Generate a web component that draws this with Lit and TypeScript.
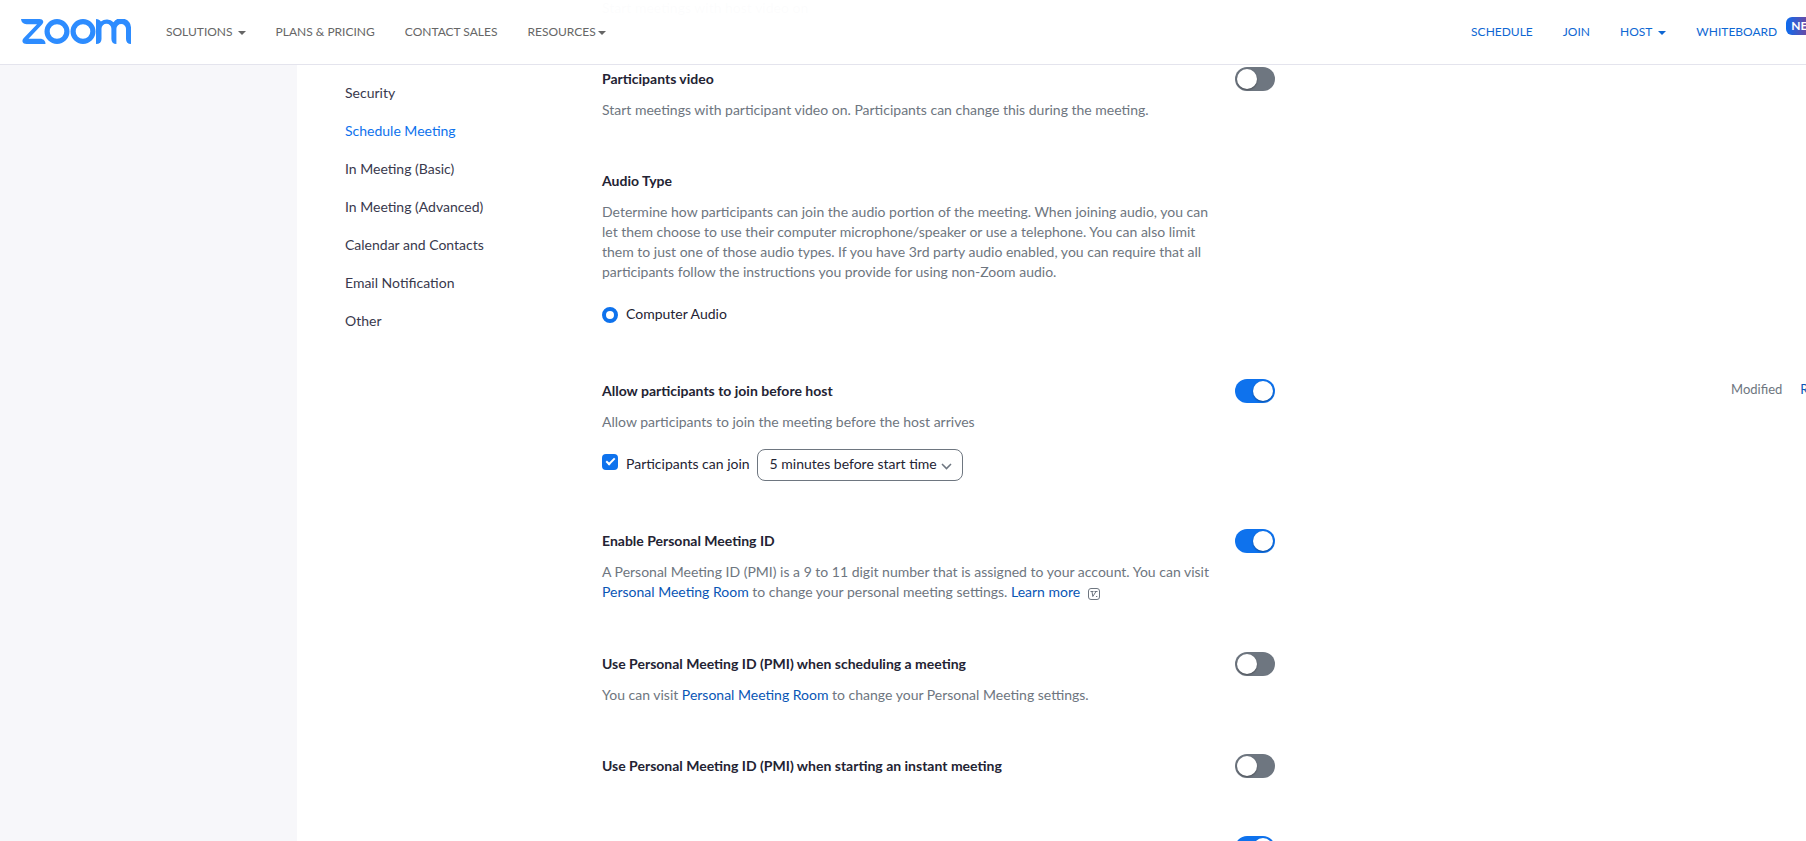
import { LitElement, html, css, svg, nothing } from "lit";
import type { TemplateResult } from "lit";
import { customElement, property } from "lit/decorators.js";
import { classMap } from "lit/directives/class-map.js";

const caret = html`<svg class="caret" viewBox="0 0 8 4" aria-hidden="true">${svg`<path d="M0 0h8L4 4z" fill="currentColor"/>`}</svg>`;

@customElement("zoom-logo")
class ZoomLogo extends LitElement {
  static styles = css`
    :host { display: block; }
    svg { display: block; width: 110px; height: 25px; }
  `;
  render() {
    return html`<svg viewBox="0 0 110 25" role="img" aria-label="zoom" fill="none" stroke="#2d8cff">
      <path d="M0 0H18.500C22.500 0 23.300 3.200 21 5.500L7.500 19.800H19C22.500 19.800 24.500 22 24.500 25H5.500C1.300 25 .3 21.600 2.800 19L16 5.200H5.500C2.200 5.200 .3 3.200 0 0z" fill="#2d8cff" stroke="none"/>
      <circle cx="36" cy="12.500" r="9.900" stroke-width="5.200"/>
      <circle cx="62" cy="12.500" r="9.900" stroke-width="5.200"/>
      <path d="M75 0c2.300 0 3.900 .9 4.900 2.500A9.500 9.500 0 0 1 92.500 3.300 9.700 9.700 0 0 1 110 9.500V25c-3.200 0-5-1.900-5-5V9.800a4.800 4.800 0 0 0-9.600 0V25c-3.200 0-5-1.900-5-5V9.800a4.900 4.900 0 0 0-9.900 0V20c0 3.100-1.900 5-5.500 5z" fill="#2d8cff" stroke="none"/>
    </svg>`;
  }
}

@customElement("site-header")
class SiteHeader extends LitElement {
  static styles = css`
    :host { display: block; background: rgba(255, 255, 255, 0.98); border-bottom: 1px solid #e4e4ed; }
    .bar { display: flex; align-items: center; height: 64px; box-sizing: border-box; padding: 0 17px 1px 21px; font-size: 12px; line-height: 20px; }
    zoom-logo { margin-right: 35px; }
    nav { display: flex; gap: 30px; }
    .account { margin-left: auto; }
    a { color: #666; text-decoration: none; white-space: nowrap; display: flex; align-items: center; gap: 5px; }
    .tight { gap: 2px; }
    .account a { color: #0e67d3; gap: 6px; }
    .caret { width: 8px; height: 4px; margin-top: 2px; }
    .board { display: flex; gap: 9px; }
    .badge { align-self: flex-start; margin-top: -5px; height: 18px; padding: 0 5px; border-radius: 6px;
      background: linear-gradient(90deg, #0b6cf0, #b3306b 36px); color: #fff; font-size: 12px; font-weight: 700; line-height: 18px; }
  `;
  render() {
    return html`<header class="bar">
      <zoom-logo></zoom-logo>
      <nav aria-label="Products">
        <a href="#solutions">SOLUTIONS ${caret}</a>
        <a href="#plans">PLANS &amp; PRICING</a>
        <a href="#sales">CONTACT SALES</a>
        <a class="tight" href="#resources">RESOURCES${caret}</a>
      </nav>
      <nav class="account" aria-label="Account">
        <a href="#schedule">SCHEDULE</a>
        <a href="#join">JOIN</a>
        <a href="#host">HOST ${caret}</a>
        <div class="board"><a href="#whiteboard">WHITEBOARD</a><span class="badge">NEW</span></div>
      </nav>
    </header>`;
  }
}

@customElement("section-menu")
class SectionMenu extends LitElement {
  static styles = css`
    :host { display: block; }
    ul { list-style: none; margin: 0; padding: 0; }
    a { display: block; color: #39394d; text-decoration: none; font-size: 14px; line-height: 38px; white-space: nowrap; }
    .current { color: #0e72ed; }
  `;
  private items = ["Security", "Schedule Meeting", "In Meeting (Basic)", "In Meeting (Advanced)", "Calendar and Contacts", "Email Notification", "Other"];
  render() {
    return html`<nav aria-label="Settings sections"><ul>
      ${this.items.map((t) => html`<li><a href="#${t.toLowerCase().replace(/\W+/g, "-")}" class=${classMap({ current: t === "Schedule Meeting" })}>${t}</a></li>`)}
    </ul></nav>`;
  }
}

@customElement("setting-item")
class SettingItem extends LitElement {
  static styles = css`
    :host { display: block; font-size: 14px; line-height: 20px; }
    .row { display: grid; grid-template-columns: minmax(0, 608px) 25px 40px minmax(0, 1fr); align-items: start; }
    h3 { margin: 0 0 10px; font-size: 14px; line-height: 22px; font-weight: 700; color: #232333; }
    .note { color: #6e7680; }
    .toggle { appearance: none; grid-column: 3; margin: -1px 0; width: 40px; height: 24px; border-radius: 12px; background: #6e7680; display: flex; align-items: center; padding: 2px; box-sizing: border-box; cursor: pointer; }
    .toggle::before { content: ""; width: 20px; height: 20px; border-radius: 50%; background: #fff; box-shadow: 0 1px 2px rgba(0, 0, 0, 0.35); }
    .toggle:checked { background: #0e72ed; justify-content: flex-end; }
    .state { grid-column: 4; display: flex; justify-content: flex-end; gap: 18px; padding-right: 10px; font-size: 13px; line-height: 18px; color: #6e7680; }
    .state a { color: #0956b5; text-decoration: none; }
  `;
  @property() heading = "";
  @property() toggle: "on" | "off" | "none" = "off";
  @property({ type: Boolean }) modified = false;
  render() {
    return html`<section class="row">
      <div>
        <h3 id="title">${this.heading}</h3>
        <div class="note"><slot></slot></div>
        <slot name="controls"></slot>
      </div>
      ${this.toggle === "none" ? nothing : html`<input class="toggle" type="checkbox" role="switch" aria-labelledby="title" .checked=${this.toggle === "on"} />`}
      ${this.modified ? html`<div class="state"><span>Modified</span><a href="#reset">Reset</a></div>` : nothing}
    </section>`;
  }
}

@customElement("app-root")
class AppRoot extends LitElement {
  static styles = css`
    :host { display: block; height: 100vh; overflow: hidden; background: #fff; font-family: Lato, sans-serif; color: #232333; }
    /* The page is slightly wider than the window, so its right edge runs off screen. */
    .page { position: relative; margin-right: -36px; }
    site-header { position: absolute; inset: 0 0 auto; z-index: 1; }
    .body { display: flex; min-height: 100vh; }
    .rail { flex: 0 0 297px; background: #f7f7fa; }
    section-menu { flex: 0 0 209px; padding: 74px 0 0 48px; }
    main { flex: 1; min-width: 0; margin: -34px 0 0 48px; display: flex; flex-direction: column; gap: 50px; }
    a { color: #0956b5; text-decoration: none; }
    .controls { display: flex; align-items: center; height: 32px; margin: 17px 0 -1px; font-size: 14px; line-height: 20px; }
    label { display: flex; align-items: center; gap: 8px; margin-bottom: 2px; }
    .radio { appearance: none; margin: 2px 0 0; width: 16px; height: 16px; border: 4px solid #0e72ed; border-radius: 50%; background: #fff; }
    .tick { appearance: none; margin: 0 0 4px; width: 16px; height: 16px; border-radius: 4px; background: #0e72ed; display: grid; place-items: center; }
    .tick::before { content: ""; width: 7px; height: 3px; border: solid #fff; border-width: 0 0 2px 2px; transform: rotate(-45deg); margin-bottom: 3px; }
    .picker { display: grid; align-items: center; margin-left: 7px; }
    .picker > * { grid-area: 1 / 1; }
    select { appearance: none; height: 32px; width: 206px; padding: 0 12px 2px; border: 1px solid #6e7680; border-radius: 8px; background: #fff; color: #232333; font: inherit; }
    .chevron { justify-self: end; margin: 2px 11px 0 0; width: 11px; height: 7px; pointer-events: none; }
    .badge { width: 12px; height: 12px; margin: 0 0 3px 4px; vertical-align: -6px; }
  `;
  render(): TemplateResult {
    return html`<div class="page">
      <site-header></site-header>
      <div class="body">
        <div class="rail"></div>
        <section-menu></section-menu>
        <main>
          <setting-item heading="Host video" toggle="off">Start meetings with host video on</setting-item>
          <setting-item heading="Participants video" toggle="off">Start meetings with participant video on. Participants can change this during the meeting.</setting-item>
          <setting-item heading="Audio Type" toggle="none">
            Determine how participants can join the audio portion of the meeting. When joining audio, you can let them choose to use their computer microphone/speaker or use a telephone. You can also limit them to just one of those audio types. If you have 3rd party audio enabled, you can require that all participants follow the instructions you provide for using non-Zoom audio.
            <div slot="controls" class="controls">
              <label><input class="radio" type="radio" name="audio" checked />Computer Audio</label>
            </div>
          </setting-item>
          <setting-item heading="Allow participants to join before host" toggle="on" modified>
            Allow participants to join the meeting before the host arrives
            <div slot="controls" class="controls">
              <label><input class="tick" type="checkbox" checked />Participants can join</label>
              <div class="picker">
                <select aria-label="How early participants can join"><option>5 minutes before start time</option></select>
                <svg class="chevron" viewBox="0 0 11 7" fill="none" stroke="#6e7680" stroke-width="1.500" aria-hidden="true"><path d="M1 1l4.500 4.600L10 1"/></svg>
              </div>
            </div>
          </setting-item>
          <setting-item heading="Enable Personal Meeting ID" toggle="on">
            A Personal Meeting ID (PMI) is a 9 to 11 digit number that is assigned to your account. You can visit <a href="#room">Personal Meeting Room</a> to change your personal meeting settings. <a href="#learn">Learn more</a>
            <svg class="badge" viewBox="0 0 12 12" fill="none" stroke="#6e7680" aria-hidden="true"><rect x=".5" y=".5" width="11" height="11" rx="2.500"/><path d="M2.500 3.500h3M4 3.500l.8 5L8 3.500M6.500 3.500h3M8 8.500h1.300"/></svg>
          </setting-item>
          <setting-item heading="Use Personal Meeting ID (PMI) when scheduling a meeting" toggle="off">You can visit <a href="#room">Personal Meeting Room</a> to change your Personal Meeting settings.</setting-item>
          <setting-item heading="Use Personal Meeting ID (PMI) when starting an instant meeting" toggle="off"></setting-item>
          <setting-item heading="Only authenticated users can join meetings" toggle="on"></setting-item>
        </main>
      </div>
    </div>`;
  }
}
